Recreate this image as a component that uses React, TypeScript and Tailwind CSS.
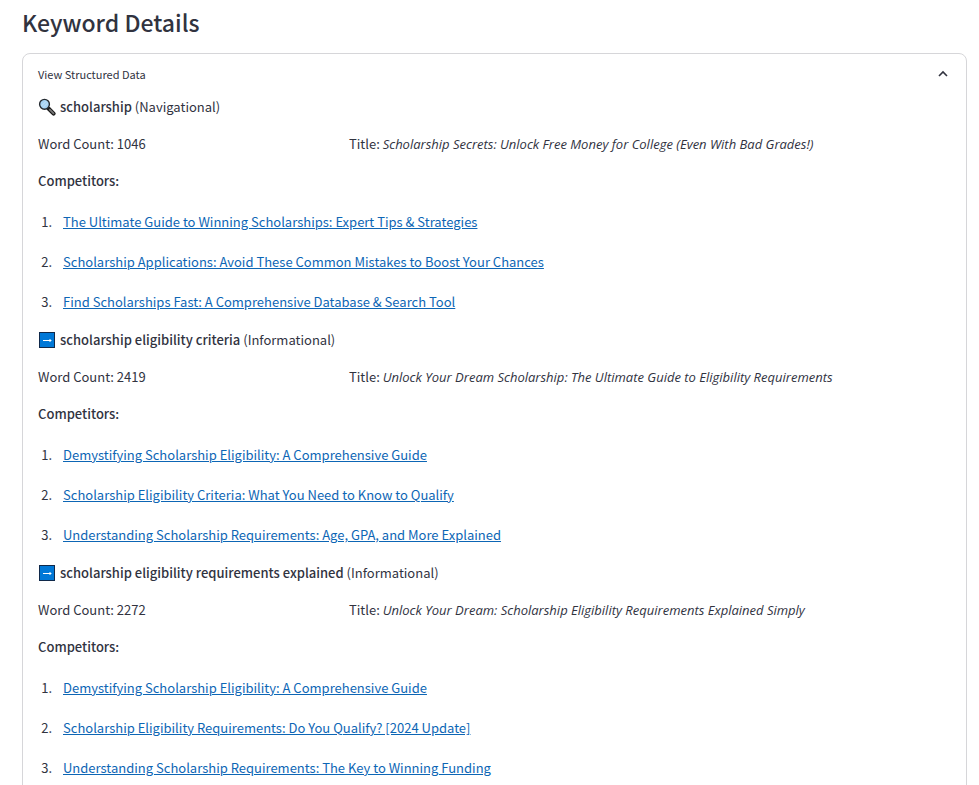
import React, { useState } from "react";

const keywords = [
  {
    keyword: "scholarship",
    intent: "Navigational",
    wordCount: 1046,
    title: "Scholarship Secrets: Unlock Free Money for College (Even With Bad Grades!)",
    competitors: [
      "The Ultimate Guide to Winning Scholarships: Expert Tips & Strategies",
      "Scholarship Applications: Avoid These Common Mistakes to Boost Your Chances",
      "Find Scholarships Fast: A Comprehensive Database & Search Tool",
    ],
  },
  {
    keyword: "scholarship eligibility criteria",
    intent: "Informational",
    wordCount: 2419,
    title: "Unlock Your Dream Scholarship: The Ultimate Guide to Eligibility Requirements",
    competitors: [
      "Demystifying Scholarship Eligibility: A Comprehensive Guide",
      "Scholarship Eligibility Criteria: What You Need to Know to Qualify",
      "Understanding Scholarship Requirements: Age, GPA, and More Explained",
    ],
  },
  {
    keyword: "scholarship eligibility requirements explained",
    intent: "Informational",
    wordCount: 2272,
    title: "Unlock Your Dream: Scholarship Eligibility Requirements Explained Simply",
    competitors: [
      "Demystifying Scholarship Eligibility: A Comprehensive Guide",
      "Scholarship Eligibility Requirements: Do You Qualify? [2024 Update]",
      "Understanding Scholarship Requirements: The Key to Winning Funding",
    ],
  },
];

function SearchIcon() {
  return (
    <svg className="w-[18px] h-[18px] shrink-0" viewBox="0 0 18 18" aria-hidden="true">
      <path d="M10.5 10.5L15.6 15.6" stroke="#1b1b1b" strokeWidth="4" strokeLinecap="round" />
      <path d="M11.8 11.6L15.5 15.3" stroke="#777777" strokeWidth="1.8" strokeLinecap="round" />
      <circle cx="6.5" cy="6.3" r="4.9" fill="#a6d3f5" stroke="#242a30" strokeWidth="1.4" />
      <path d="M3.4 8L8.2 3.2M5.2 9.4L9.6 5" stroke="#c6e5fb" strokeWidth="1" />
    </svg>
  );
}

function ArrowIcon() {
  return (
    <svg className="w-[18px] h-[18px] shrink-0" viewBox="0 0 18 18" aria-hidden="true">
      <rect x="1.5" y="1.5" width="15" height="15" fill="#0078d7" stroke="#10294a" />
      <path d="M5 9.5H13M11.5 8L13 9.5L11.5 11" fill="none" stroke="#ffffff" strokeWidth="1" />
    </svg>
  );
}

function KeywordItem({ item }: any) {
  return (
    <div className="flex flex-col gap-[15px]">
      <div className="flex items-center gap-1">
        {item.intent === "Navigational" ? <SearchIcon /> : <ArrowIcon />}
        <p>
          <strong className="font-medium">{item.keyword}</strong> ({item.intent})
        </p>
      </div>
      <div className="grid grid-cols-[1fr_2fr] gap-2.5">
        <p>Word Count: {item.wordCount}</p>
        <p>
          Title: <em className="font-['Open_Sans','Noto_Sans',sans-serif]">{item.title}</em>
        </p>
      </div>
      <p className="font-medium">Competitors:</p>
      <ol className="mt-1 flex flex-col gap-[18px] pl-[17px] list-decimal">
        {item.competitors.map((name: string) => (
          <li key={name} className="pl-2">
            <a href="#" className="text-[#0d66b5] underline underline-offset-1">
              {name}
            </a>
          </li>
        ))}
      </ol>
    </div>
  );
}

export default function App() {
  const [open, setOpen] = useState(true);

  return (
    <main className="min-h-screen bg-white pl-[22px] pr-3 pt-1.5 pb-4 font-['Noto_Sans_CJK_SC',sans-serif] text-[13px] leading-[22px] text-[#31333f]">
      <h2 className="text-[23px] leading-8 font-medium">Keyword Details</h2>
      <section className="mt-[15px] rounded-lg border border-[#d6d6d9] px-[15px] pb-4">
        <button
          type="button"
          aria-expanded={open}
          className="flex w-full items-center justify-between pt-[9px] text-[11px] leading-[22px]"
          onClick={() => setOpen(!open)}
        >
          View Structured Data
          <svg
            className={open ? "w-4 h-4" : "w-4 h-4 rotate-180"}
            viewBox="0 0 16 16"
            aria-hidden="true"
          >
            <path d="M4 10L8 6L12 10" fill="none" stroke="#31333f" strokeWidth="1.6" />
          </svg>
        </button>
        {open && (
          <div className="mt-[11px] flex flex-col gap-4">
            {keywords.map((item) => (
              <KeywordItem key={item.keyword} item={item} />
            ))}
          </div>
        )}
      </section>
    </main>
  );
}
